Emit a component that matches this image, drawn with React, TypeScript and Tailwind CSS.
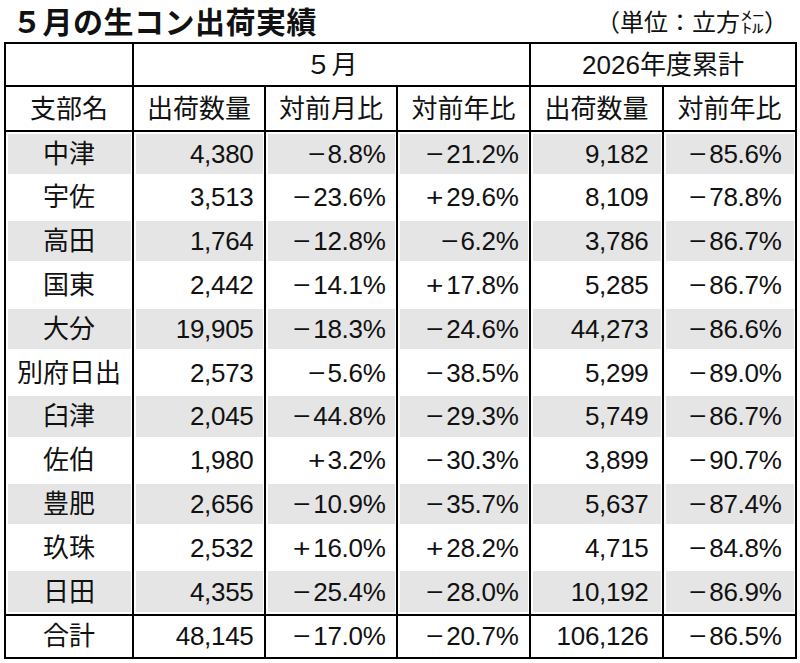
import React from "react";

const GRID = "grid grid-cols-[126px_132px_132px_133px_133px_133px]";

type Row = [string, string, string, string, string, string];

const rows: Row[] = [
  ["中津", "4,380", "−8.8%", "−21.2%", "9,182", "−85.6%"],
  ["宇佐", "3,513", "−23.6%", "+29.6%", "8,109", "−78.8%"],
  ["高田", "1,764", "−12.8%", "−6.2%", "3,786", "−86.7%"],
  ["国東", "2,442", "−14.1%", "+17.8%", "5,285", "−86.7%"],
  ["大分", "19,905", "−18.3%", "−24.6%", "44,273", "−86.6%"],
  ["別府日出", "2,573", "−5.6%", "−38.5%", "5,299", "−89.0%"],
  ["臼津", "2,045", "−44.8%", "−29.3%", "5,749", "−86.7%"],
  ["佐伯", "1,980", "+3.2%", "−30.3%", "3,899", "−90.7%"],
  ["豊肥", "2,656", "−10.9%", "−35.7%", "5,637", "−87.4%"],
  ["玖珠", "2,532", "+16.0%", "+28.2%", "4,715", "−84.8%"],
  ["日田", "4,355", "−25.4%", "−28.0%", "10,192", "−86.9%"],
];

const total: Row = ["合計", "48,145", "−17.0%", "−20.7%", "106,126", "−86.5%"];

function Value({ v }: { v: string }) {
  const first = v.charAt(0);
  if (first === "−" || first === "+") {
    return (
      <span className="tracking-[-0.3px] whitespace-nowrap">
        <span className="inline-block mr-[4px] scale-x-[1.15]">{first}</span>
        {v.slice(1)}
      </span>
    );
  }
  return <span className="tracking-[-0.3px] whitespace-nowrap">{v}</span>;
}

function DataRow({ r, gray, className }: { r: Row; gray: boolean; className: string }) {
  return (
    <div className={`${GRID} ${className}`}>
      {r.map((v, i) => (
        <div
          key={i}
          className={i > 0 ? "p-[1.5px] pb-[2px] border-l-2 border-black" : "p-[1.5px] pb-[2px]"}
        >
          <div
            className={`h-full flex items-center ${
              i === 0 ? "justify-center" : i >= 4 ? "justify-end pr-[12px]" : "justify-end pr-[9px]"
            } ${gray ? "bg-[#e5e5e5]" : ""}`}
          >
            {i === 0 ? <span className="whitespace-nowrap">{v}</span> : <Value v={v} />}
          </div>
        </div>
      ))}
    </div>
  );
}

export default function App() {
  return (
    <div
      className="w-[800px] h-[663px] bg-white text-[#111]"
      style={{ fontFamily: '"Liberation Sans", "Noto Sans CJK JP", sans-serif' }}
    >
      <div className="h-[42px] pt-[4px] flex items-start justify-between pl-[10px] pr-[12px]">
        <div
          className="text-[30px] font-bold leading-[32px] tracking-[0.5px] whitespace-nowrap shrink-0 px-[2px]"
          style={{ fontFamily: '"Noto Sans CJK JP", sans-serif' }}
        >
          ５月の生コン出荷実績
        </div>
        <div
          className="text-[24px] leading-[30px] pt-[2px] whitespace-nowrap"
          style={{ fontFamily: '"Noto Sans CJK JP", sans-serif' }}
        >
          （単位：立方㍍）
        </div>
      </div>
      <div className="ml-[4px] w-[793px] border-2 border-black text-[26px] leading-none">
        <div className={`${GRID} h-[43px] border-b-2 border-black`}>
          <div />
          <div className="col-span-3 border-l-2 border-black flex items-center justify-center">
            ５月
          </div>
          <div className="col-span-2 border-l-2 border-black flex items-center justify-center">
            2026年度累計
          </div>
        </div>
        <div className={`${GRID} h-[45px] border-b-2 border-black`}>
          {["支部名", "出荷数量", "対前月比", "対前年比", "出荷数量", "対前年比"].map((h, i) => (
            <div
              key={i}
              className={`flex items-center justify-center ${i > 0 ? "border-l-2 border-black" : ""}`}
            >
              {h}
            </div>
          ))}
        </div>
        {rows.map((r, idx) => (
          <DataRow key={idx} r={r} gray={idx % 2 === 0} className="h-[43.8px]" />
        ))}
        <DataRow r={total} gray={false} className="h-[43px] border-t-2 border-black" />
      </div>
    </div>
  );
}
